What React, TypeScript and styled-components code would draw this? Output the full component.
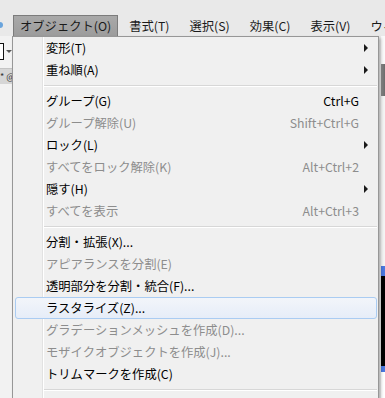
import styled, { createGlobalStyle } from "styled-components";

const GlobalStyle = createGlobalStyle`
  html, body {
    margin: 0;
    padding: 0;
    background: #f0f0f0;
  }
  body {
    font-family: "Noto Sans CJK JP", "Noto Sans", sans-serif;
  }
`;

const Screen = styled.div`
  width: 385px;
  height: 398px;
  overflow: hidden;
  background: #ececec;
  display: flex;
  flex-direction: column;
`;

const TopStrip = styled.div`
  height: 14px;
  flex-shrink: 0;
  background: #e9e9e9;
`;

const MenuBar = styled.div`
  height: 22px;
  flex-shrink: 0;
  display: flex;
  align-items: stretch;
  overflow: hidden;
  background: #e9e9e9;
  font-size: 12.3px;
  color: #1a1a1a;
`;

const BarEdge = styled.div`
  width: 13px;
  flex-shrink: 0;
  display: flex;
  align-items: center;
`;

const BlueDot = styled.span`
  width: 3px;
  height: 6px;
  background: #6aa4dc;
  border-radius: 0 3px 3px 0;
`;

const BarItem = styled.div<{ $open?: boolean }>`
  flex-shrink: 0;
  display: flex;
  align-items: center;
  padding: 0 ${(p) => (p.$open ? "6px" : "9px")};
  margin-right: ${(p) => (p.$open ? "1px" : "0")};
  margin-top: 1px;
  border: 1px solid ${(p) => (p.$open ? "#7c7c7c" : "transparent")};
  border-bottom: none;
  background: ${(p) => (p.$open ? "linear-gradient(#a9a9a9, #9c9c9c)" : "transparent")};
  white-space: nowrap;
`;

const Body = styled.div`
  flex: 1;
  display: flex;
  min-height: 0;
`;

const LeftSide = styled.div`
  width: 12px;
  flex-shrink: 0;
  display: flex;
  flex-direction: column;
  background: #f2f2f2;
`;

const InputStub = styled.div`
  margin-top: 7px;
  height: 17px;
  display: flex;
  align-items: center;
  gap: 2px;
`;

const InputBox = styled.div`
  width: 4px;
  height: 15px;
  background: #fff;
  border: 1px solid #111;
  border-left: none;
`;

const DownArrow = styled.div`
  width: 0;
  height: 0;
  border-left: 3px solid transparent;
  border-right: 3px solid transparent;
  border-top: 3px solid #555;
`;

const GrayBand = styled.div`
  margin-top: 8px;
  height: 15px;
  background: #d6d6d6;
  font-size: 9px;
  color: #333;
  line-height: 15px;
  overflow: hidden;
  white-space: nowrap;
  border-top: 1px solid #c4c4c4;
`;

const Dropdown = styled.div`
  width: 363px;
  flex-shrink: 0;
  border: 1px solid #979797;
  border-bottom: none;
  background: #f0f0f0;
  display: flex;
  flex-direction: column;
  padding: 0 1px;
  position: relative;
  overflow: hidden;
  box-shadow: 2px 2px 3px rgba(0, 0, 0, 0.25);
  font-size: 12.3px;
`;

const Gutter = styled.div`
  position: absolute;
  left: 29px;
  top: 0;
  bottom: 0;
  width: 1px;
  background: #e2e2e2;
  border-right: 1px solid #fff;
`;

const Row = styled.div<{ $disabled?: boolean; $hover?: boolean }>`
  height: 22px;
  flex-shrink: 0;
  display: flex;
  align-items: center;
  padding-left: 30px;
  padding-right: 8px;
  color: ${(p) => (p.$disabled ? "#8d8d8d" : "#000")};
  box-sizing: border-box;
  position: relative;
  border: 1px solid ${(p) => (p.$hover ? "#aaccf2" : "transparent")};
  border-radius: 3px;
  margin-left: 1px;
  background: ${(p) => (p.$hover ? "linear-gradient(#f2f5fa, #e6edf8)" : "transparent")};
  white-space: nowrap;
`;

const Label = styled.span`
  flex: 1;
`;

const Shortcut = styled.span`
  color: inherit;
  margin-right: 9px;
`;

const SubArrow = styled.span`
  width: 0;
  height: 0;
  border-top: 4px solid transparent;
  border-bottom: 4px solid transparent;
  border-left: 4px solid #1a1a1a;
`;

const Separator = styled.div`
  height: 9px;
  flex-shrink: 0;
  display: flex;
  align-items: center;
  padding-left: 28px;
  &::after {
    content: "";
    flex: 1;
    height: 1px;
    background: #d7d7d7;
    border-bottom: 1px solid #fff;
  }
`;

const RightSide = styled.div`
  flex: 1;
  display: flex;
  flex-direction: column;
  background: #fff;
  margin-left: 2px;
`;

const RightPanel = styled.div<{ $h: number; $bg: string }>`
  height: ${(p) => p.$h}px;
  flex-shrink: 0;
  background: ${(p) => p.$bg};
`;

type Item =
  | { sep: true }
  | {
      sep?: false;
      label: string;
      shortcut?: string;
      sub?: boolean;
      disabled?: boolean;
      hover?: boolean;
    };

const items: Item[] = [
  { label: "変形(T)", sub: true },
  { label: "重ね順(A)", sub: true },
  { sep: true },
  { label: "グループ(G)", shortcut: "Ctrl+G" },
  { label: "グループ解除(U)", shortcut: "Shift+Ctrl+G", disabled: true },
  { label: "ロック(L)", sub: true },
  { label: "すべてをロック解除(K)", shortcut: "Alt+Ctrl+2", disabled: true },
  { label: "隠す(H)", sub: true },
  { label: "すべてを表示", shortcut: "Alt+Ctrl+3", disabled: true },
  { sep: true },
  { label: "分割・拡張(X)..." },
  { label: "アピアランスを分割(E)", disabled: true },
  { label: "透明部分を分割・統合(F)..." },
  { label: "ラスタライズ(Z)...", hover: true },
  { label: "グラデーションメッシュを作成(D)...", disabled: true },
  { label: "モザイクオブジェクトを作成(J)...", disabled: true },
  { label: "トリムマークを作成(C)" },
  { sep: true },
  { label: "スライス(S)", sub: true },
];

const menus = ["書式(T)", "選択(S)", "効果(C)", "表示(V)", "ウィンドウ(W)"];

export default function App() {
  return (
    <>
      <GlobalStyle />
      <Screen>
        <TopStrip />
        <MenuBar>
          <BarEdge>
            <BlueDot />
          </BarEdge>
          <BarItem $open>オブジェクト(O)</BarItem>
          {menus.map((m) => (
            <BarItem key={m}>{m}</BarItem>
          ))}
        </MenuBar>
        <Body>
          <LeftSide>
            <InputStub>
              <InputBox />
              <DownArrow />
            </InputStub>
            <GrayBand>* @</GrayBand>
          </LeftSide>
          <Dropdown>
            <Gutter />
            {items.map((it, i) =>
              it.sep ? (
                <Separator key={i} />
              ) : (
                <Row key={i} $disabled={it.disabled} $hover={it.hover}>
                  <Label>{it.label}</Label>
                  {it.shortcut && <Shortcut>{it.shortcut}</Shortcut>}
                  {it.sub && <SubArrow />}
                </Row>
              )
            )}
          </Dropdown>
          <RightSide>
            <RightPanel $h={28} $bg="#fafafa" />
            <RightPanel $h={32} $bg="linear-gradient(90deg, #8c8c8c, #6a6a6a)" />
            <RightPanel $h={170} $bg="#f4f4f4" />
            <RightPanel $h={10} $bg="#4a78e0" />
            <RightPanel $h={90} $bg="#000" />
            <RightPanel $h={6} $bg="#4a78e0" />
            <RightPanel $h={40} $bg="#fff" />
          </RightSide>
        </Body>
      </Screen>
    </>
  );
}
